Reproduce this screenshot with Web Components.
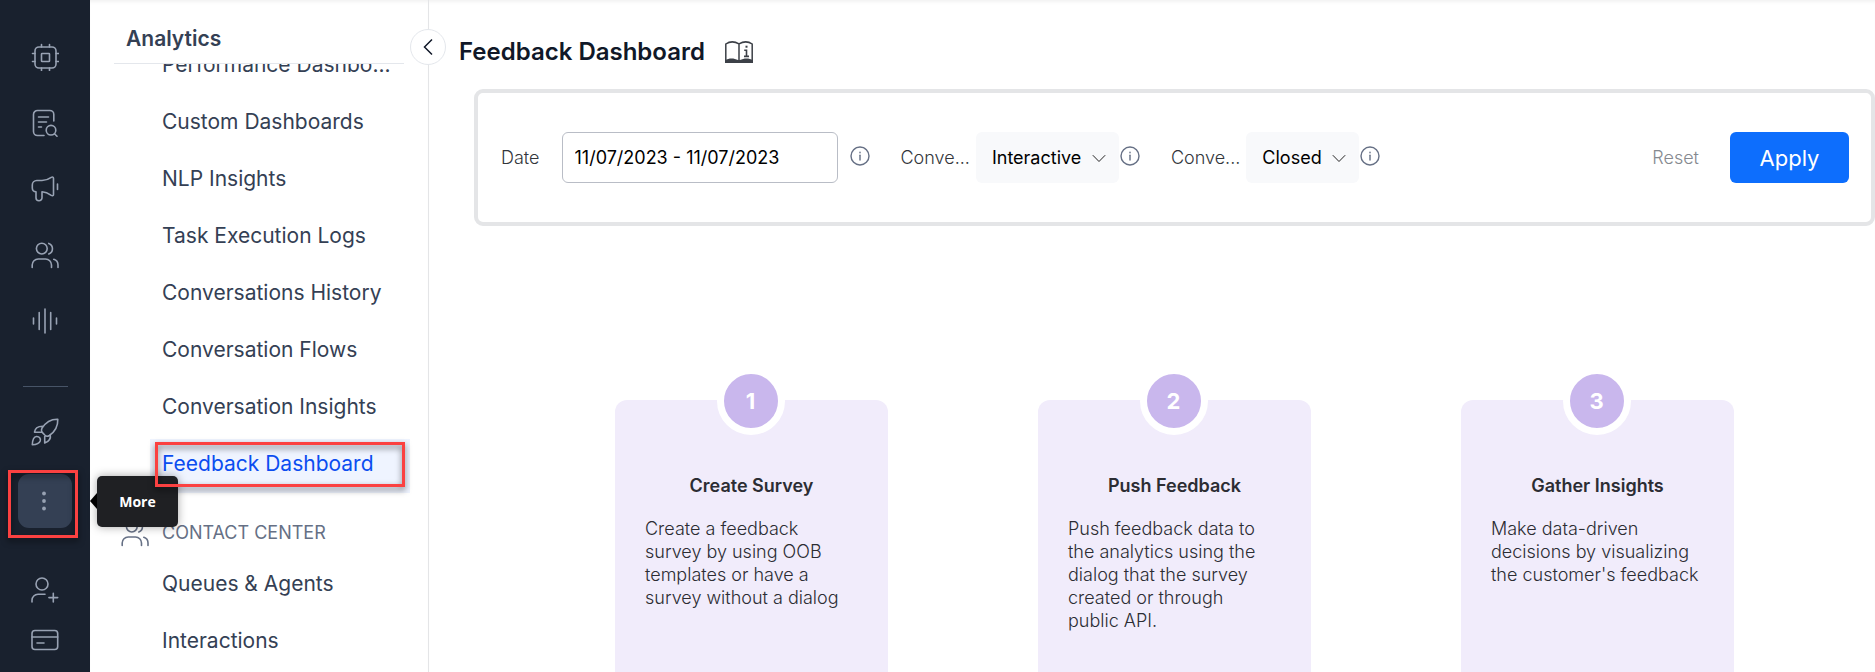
<!DOCTYPE html>
<html lang="en">
<head>
<meta charset="utf-8">
<title>Feedback Dashboard</title>
<style>
  html, body { height: 100%; margin: 0; }
  body { font-family: Inter, "Liberation Sans", sans-serif; background: #fff; color: #344054; overflow: hidden; }
</style>
</head>
<body>
<app-shell>
  <nav-rail slot="rail"></nav-rail>
  <side-panel slot="panel" heading="Analytics">
    <side-link>Performance Dashbo...</side-link>
    <side-link>Custom Dashboards</side-link>
    <side-link>NLP Insights</side-link>
    <side-link>Task Execution Logs</side-link>
    <side-link>Conversations History</side-link>
    <side-link>Conversation Flows</side-link>
    <side-link>Conversation Insights</side-link>
    <side-link selected>Feedback Dashboard</side-link>
    <side-group>CONTACT CENTER</side-group>
    <side-link>Queues &amp; Agents</side-link>
    <side-link>Interactions</side-link>
  </side-panel>
  <page-heading>Feedback Dashboard</page-heading>
  <filter-bar></filter-bar>
  <step-list>
    <step-card number="1" heading="Create Survey">Create a feedback survey by using OOB templates or have a survey without a dialog</step-card>
    <step-card number="2" heading="Push Feedback">Push feedback data to the analytics using the dialog that the survey created or through public API.</step-card>
    <step-card number="3" heading="Gather Insights">Make data-driven decisions by visualizing the customer's feedback</step-card>
  </step-list>
</app-shell>

<script>
const define = (name, render) => customElements.define(name, class extends HTMLElement {
  constructor() { super(); this.attachShadow({ mode: "open" }); }
  connectedCallback() { this.shadowRoot.innerHTML = render(this); }
});

const ICONS = {
  cpu: '<rect x="4" y="4" width="21" height="21" rx="4"/><rect x="10.5" y="10.5" width="8" height="8" rx=".6"/><path d="M10.5 1.5V4M18.5 1.5V4M10.5 25v2.500M18.500 25v2.500M1.500 10.500H4M1.500 18.500H4M25 10.500h2.500M25 18.500h2.500"/>',
  doc: '<path d="M22.800 12V5.500a4 4 0 0 0-4-4H6.500a4 4 0 0 0-4 4v17a4 4 0 0 0 4 4h6.500M7.500 8h10M7.500 13h8M7.500 18h3"/><circle cx="20" cy="21.200" r="4.800"/><path d="M23.500 24.700 26 27.200"/>',
  horn: '<path d="M5 16.700A3.800 3.800 0 0 1 1.300 13v-3A4.500 4.500 0 0 1 5.800 5.500H11c3.800 0 6.800-1.300 9.300-3.100 1.200-.8 2.200-.3 2.200 1v16c0 1.200-1 1.700-2.200 1-2.800-2-6-3.500-9.300-3.700v6a3 3 0 0 1-6 0zM26.500 9v5.500"/>',
  users: '<circle cx="10.800" cy="7.600" r="5.400"/><path d="M1.200 26.500V24a6 6 0 0 1 6-6h7.300a6 6 0 0 1 6 6v2.500M17.800 2.400a5.600 5.600 0 0 1 0 10.500M22.800 18.300a6 6 0 0 1 4.200 5.700v2.500"/>',
  wave: '<path d="M2.500 11v6M8.200 5.500v17M14 2v24M19.700 5.500v17M25.500 11v6"/>',
  rocket: '<path d="M26.800 1.200C20 1 14.500 4.500 11 10.200c-.7 1.300-.8 2.800 0 3.900l3 3.200c1.200 1.200 3 1 4.300.2C24 13.700 27 8 26.800 1.200zM12.500 8.200C8 8 4 9.500 3.500 14.200h6.800M19.300 16.800c.8 4.200-1.600 6.700-5.600 8.200v-6.500M1.300 26.800c.2-5 1-8 4.200-8.300 2.800-.2 4.500 2 3.700 4.500-.9 2.500-3.700 3.600-7.900 3.800z"/>',
  more: '<g fill="currentColor" stroke="none"><circle cx="13" cy="6.500" r="1.900"/><circle cx="13" cy="14" r="1.900"/><circle cx="13" cy="21.500" r="1.900"/></g>',
  invite: '<circle cx="11" cy="8" r="6"/><path d="M1 26v-1.800A6 6 0 0 1 7 18.200h7M22.300 17.200v8.800M17.900 21.600h8.800"/>',
  card: '<rect x="1" y="4.500" width="25.700" height="19" rx="3"/><path d="M1 11h25.700M6 17h7"/>',
  info: '<circle cx="14" cy="14" r="12.600"/><path d="M14 13v6.500"/><path d="M14 8.700v.8"/>'
};
const icon = (name, width = 1.6) =>
  `<svg class="icon" viewBox="0 0 28 28" fill="none" stroke="currentColor" stroke-width="${width}" stroke-linecap="round" stroke-linejoin="round" aria-hidden="true">${ICONS[name]}</svg>`;

/* Red callout frame drawn around a highlighted control */
const FRAME = `
  .frame { position: absolute; border: 3px solid #fb4141; filter: drop-shadow(0 3px 3px rgba(0,0,0,.55)); pointer-events: none; z-index: 6; }`;

define("app-shell", () => `
  <style>
    :host { display: grid; grid-template-columns: 90px 339px minmax(0, 1fr); height: 100vh; overflow: hidden; }
    ::slotted([slot]) { min-height: 0; }
    main { display: flex; flex-direction: column; min-height: 0; overflow: hidden; box-shadow: inset 0 4px 4px -3px rgba(0,0,0,.08); }
  </style>
  <slot name="rail"></slot>
  <slot name="panel"></slot>
  <main><slot></slot></main>`);

define("nav-rail", () => `
  <style>
    :host { display: block; background: #19212e; }
    nav { display: flex; flex-direction: column; align-items: center; padding-top: 24px; }
    hr { width: 45px; height: 1px; margin: 32px 0 12px; border: 0; background: #475467; }
    .foot { display: flex; flex-direction: column; margin-top: 31px; }
  </style>
  <nav aria-label="Main">
    <rail-button icon="cpu" label="Automation"></rail-button>
    <rail-button icon="doc" label="Search"></rail-button>
    <rail-button icon="horn" label="Campaigns"></rail-button>
    <rail-button icon="users" label="Agents"></rail-button>
    <rail-button icon="wave" label="Voice"></rail-button>
    <hr>
    <rail-button icon="rocket" label="Launch"></rail-button>
    <rail-button icon="more" label="More" active></rail-button>
    <div class="foot">
      <rail-button icon="invite" label="Invite" compact></rail-button>
      <rail-button icon="card" label="Billing" compact></rail-button>
    </div>
  </nav>`);

define("rail-button", el => `
  <style>
    :host { display: flex; align-items: center; justify-content: center; width: 90px; height: 66px; }
    :host([compact]) { height: 50px; }
    :host([active]) { margin-top: 3px; }
    .wrap { position: relative; display: flex; }
    button { display: flex; align-items: center; justify-content: center; width: 54px; height: 54px; padding: 0; border: 0; border-radius: 11px; background: none; color: #98a2b3; }
    :host([compact]) button { height: 46px; }
    :host([active]) button { background: #344054; }
    .icon { width: 28px; height: 28px; }
    ${FRAME}
    .frame { inset: -4px -6px -10px -10px; }
    .tip { position: absolute; left: 79px; top: 2px; z-index: 5; width: 81px; height: 51px; border-radius: 5px; background: #1f2023; color: #fff; font: 700 14px/51px "Open Sans", "Noto Sans", sans-serif; text-align: center; box-shadow: 0 0 10px rgba(0,0,0,.35); }
    .tip::before { content: ""; position: absolute; left: -7px; top: 17px; border: solid transparent; border-width: 8px 7px 8px 0; border-right-color: #000; }
  </style>
  <div class="wrap">
    <button type="button" aria-label="${el.getAttribute("label")}">${icon(el.getAttribute("icon"))}</button>
    ${el.hasAttribute("active") ? '<span class="frame"></span><span class="tip" role="tooltip">More</span>' : ""}
  </div>`);

define("side-panel", el => `
  <style>
    :host { position: relative; display: flex; flex-direction: column; box-sizing: border-box; border-right: 1px solid #e4e5e7; background: #fff; box-shadow: inset 0 4px 4px -3px rgba(0,0,0,.08); }
    h2 { flex: none; box-sizing: border-box; height: 64px; margin: 0 24px; padding: 26px 12px 0; border-bottom: 1px solid #e4e7ec; font-size: 21px; line-height: 26px; font-weight: 600; color: #344054; }
    .list { flex: 1; min-height: 0; overflow: hidden; }
    .scrolled { display: flex; flex-direction: column; gap: 3px; margin-top: -24px; }
    button { position: absolute; right: -18px; top: 29px; display: flex; align-items: center; justify-content: center; width: 36px; height: 36px; padding: 0; border: 1px solid #e4e7ec; border-radius: 50%; background: #fff; color: #101828; z-index: 4; }
    svg { width: 10px; height: 18px; }
  </style>
  <h2>${el.getAttribute("heading")}</h2>
  <div class="list"><div class="scrolled"><slot></slot></div></div>
  <button type="button" aria-label="Collapse panel"><svg viewBox="0 0 10 18" fill="none" stroke="currentColor" stroke-width="1.500"><path d="M9 1.500 1.500 9 9 16.500"/></svg></button>`);

define("side-link", el => `
  <style>
    :host { position: relative; display: block; margin: 0 18px 0 60px; }
    a { display: block; box-sizing: border-box; height: 54px; padding: 0 12px; font-size: 21px; line-height: 50px; color: #344054; text-decoration: none; white-space: nowrap; }
    :host([selected]) a { background: #eff4ff; color: #0b4df0; }
    ${FRAME}
    .frame { inset: 3px 5px 6px 5px; }
  </style>
  <a href="#"><slot></slot></a>
  ${el.hasAttribute("selected") ? '<span class="frame"></span>' : ""}`);

define("side-group", () => `
  <style>
    :host { display: flex; align-items: center; box-sizing: border-box; height: 54px; margin: 6px 18px 0 31px; padding-top: 8px; color: #667085; }
    .icon { width: 28px; height: 28px; margin-right: 13px; }
    h3 { margin: 0; font-size: 18px; line-height: 24px; font-weight: 400; }
  </style>
  ${icon("users")}<h3><slot></slot></h3>`);

define("page-heading", () => `
  <style>
    :host { display: flex; flex: none; align-items: center; gap: 20px; height: 61px; padding: 21px 0 7px 30px; }
    h1 { margin: 0; font-size: 24px; line-height: 32px; font-weight: 600; color: #101828; }
    svg { width: 28px; height: 22px; color: #3c4047; }
  </style>
  <h1><slot></slot></h1>
  <svg viewBox="0 0 28 22" fill="none" stroke="currentColor" stroke-width="1.500" aria-hidden="true">
    <path d="M.8 20.500V3C4.500.500 9.500.300 14 2.800 18.500.300 23.500.500 27.200 3v17.500M14 2.800V19"/>
    <path d="M0 19.200c4-2.400 9-2.300 13-.2h2c4-2.100 9-2.200 13 .2V22H0z" fill="currentColor" stroke="none"/>
    <path d="M19.200 9.200h2.300v6M19 15.400h5" stroke-width="1.600"/><path d="M20.500 5.700h2" stroke-width="2"/>
  </svg>`);

define("filter-bar", () => `
  <style>
    :host { display: block; flex: none; margin-left: 45px; }
    form { display: flex; align-items: center; height: 129px; padding: 0 22px 0 23px; border: 4px solid #e4e5e7; border-radius: 9px; }
    label { font-size: 18px; line-height: 24px; font-weight: 300; color: #33363b; }
    input { box-sizing: border-box; width: 276px; height: 51px; margin: 0 12px 0 22px; padding: 0 12px; border: 1px solid #b9bdc6; border-radius: 6px; background: #fff; font: 400 18px Inter, sans-serif; color: #000; }
    filter-select { margin-left: 31px; }
    .reset, .apply { padding: 0; border: 0; font-family: inherit; }
    .reset { margin-left: auto; background: none; font-size: 18px; font-weight: 300; color: #85898f; }
    .apply { width: 119px; height: 51px; margin-left: 31px; border-radius: 6px; background: #0d6efd; font-size: 22px; color: #fff; }
  </style>
  <form>
    <label for="date">Date</label>
    <input id="date" type="text" value="11/07/2023 - 11/07/2023">
    <info-mark></info-mark>
    <filter-select label="Conve..." value="Interactive"></filter-select>
    <filter-select label="Conve..." value="Closed"></filter-select>
    <button class="reset" type="button">Reset</button>
    <button class="apply" type="button">Apply</button>
  </form>`);

define("info-mark", () => `
  <style>
    :host { display: flex; height: 24px; padding-bottom: 2px; box-sizing: border-box; color: #667085; }
    .icon { width: 20px; height: 20px; }
  </style>
  ${icon("info", 2)}`);

define("filter-select", el => `
  <style>
    :host { display: flex; align-items: center; }
    label { margin-right: 6px; font-size: 18px; line-height: 24px; font-weight: 300; color: #33363b; }
    .box { position: relative; display: flex; margin-right: 1px; }
    select { appearance: none; height: 51px; padding: 0 37px 0 16px; border: 0; border-radius: 6px; background: #f8f9fb; font: 400 18px Inter, sans-serif; color: #000; }
    svg { position: absolute; right: 13px; top: 22px; width: 14px; height: 9px; pointer-events: none; }
  </style>
  <label for="choice">${el.getAttribute("label")}</label>
  <span class="box">
    <select id="choice"><option>${el.getAttribute("value")}</option></select>
    <svg viewBox="0 0 14 9" fill="none" stroke="#222" stroke-width="1"><path d="m.8 1.200 6.200 6.300 6.200-6.300"/></svg>
  </span>
  <info-mark></info-mark>`);

define("step-list", () => `
  <style>
    :host { display: flex; flex: 1 0 auto; justify-content: center; gap: 150px; margin: 174px 0 0 45px; }
  </style>
  <slot></slot>`);

define("step-card", el => `
  <style>
    :host { position: relative; flex: 0 0 273px; box-sizing: border-box; min-height: 300px; padding: 74px 30px 30px; border-radius: 12px; background: #f1ecfb; color: #2c2d33; }
    .badge { position: absolute; left: 50%; top: -33px; width: 54px; height: 54px; margin-left: -35px; border: 7px solid #fff; border-radius: 50%; background: #c9b7ed; color: #fff; font-size: 22px; line-height: 54px; font-weight: 700; text-align: center; }
    h2 { margin: 0 0 19px; font-size: 18px; line-height: 24px; font-weight: 600; text-align: center; }
    p { margin: 0; padding-right: 4px; font-size: 18px; line-height: 23px; font-weight: 300; }
  </style>
  <span class="badge">${el.getAttribute("number")}</span>
  <h2>${el.getAttribute("heading")}</h2>
  <p><slot></slot></p>`);
</script>
</body>
</html>
